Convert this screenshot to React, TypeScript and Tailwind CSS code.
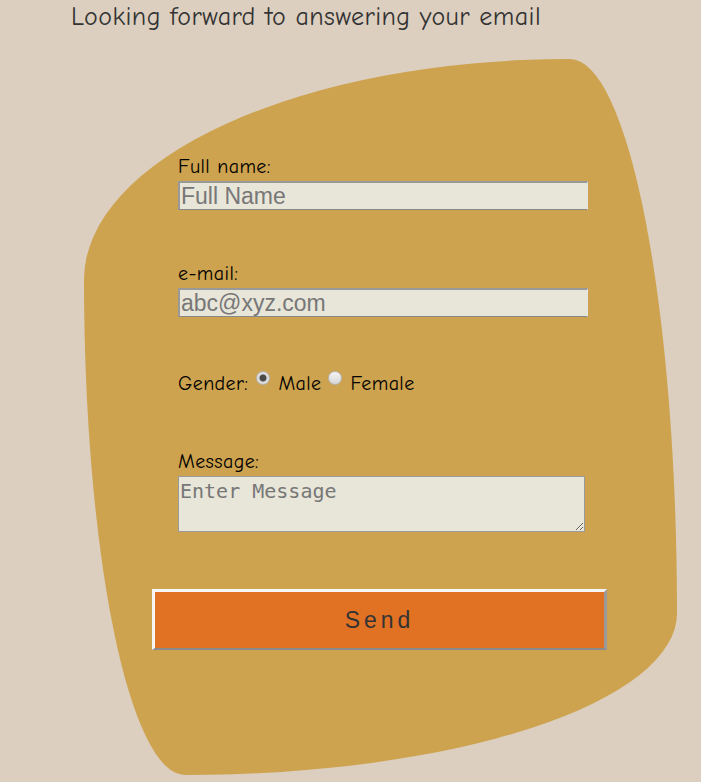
import { useState } from 'react';

const comic = 'font-["Comic_Sans_MS","Comic_Neue","Open_Sans",sans-serif]';

export default function App() {
  const [gender, setGender] = useState('male');

  return (
    <div className={`min-h-screen bg-[#dccfbf] overflow-hidden ${comic}`}>
      <h1 className="pl-[71px] text-[26px] tracking-[0.45px] leading-[35px] text-[#333333]">
        Looking forward to answering your email
      </h1>

      {/* Blob card */}
      <div className="ml-[84px] mt-[24px] w-[593px] h-[716px] bg-[#cda34f] rounded-[486px_107px_492px_101px/221px_554px_162px_495px]">
        <form className="pt-[96px] pl-[68px]" onSubmit={(e) => e.preventDefault()}>
          <div className="ml-[26px]">
            <label className="block text-[20px] tracking-[0.4px] leading-[24px] text-black">Full name:</label>
            <input
              type="text"
              placeholder="Full Name"
              className="mt-[2px] block w-[410px] h-[29px] bg-[#e8e5d9] border-t-2 border-l-2 border-b border-r border-t-[#999] border-l-[#999] border-b-[#888] border-r-[#e4e4e4] px-[1px] font-['Liberation_Sans',Arial,sans-serif] text-[23px] leading-[26px] text-[#555] placeholder:text-[#777] outline-none"
            />

            <label className="mt-[52px] block text-[20px] tracking-[0.4px] leading-[24px] text-black">e-mail:</label>
            <input
              type="email"
              placeholder="abc@xyz.com"
              className="mt-[2px] block w-[410px] h-[29px] bg-[#e8e5d9] border-t-2 border-l-2 border-b border-r border-t-[#999] border-l-[#999] border-b-[#888] border-r-[#e4e4e4] px-[1px] font-['Liberation_Sans',Arial,sans-serif] text-[23px] leading-[26px] text-[#555] placeholder:text-[#777] outline-none"
            />

            <div className="mt-[54px] text-[20px] tracking-[0.4px] leading-[24px] text-black">
              Gender:
              <input
                type="radio"
                name="gender"
                checked={gender === 'male'}
                onChange={() => setGender('male')}
                className="ml-[8px] mr-[8px] w-[14px] h-[14px] appearance-none rounded-full border border-[#b5b5b5] bg-[linear-gradient(#f4f4f4,#d6d6d6)] checked:bg-[radial-gradient(circle,#4a4a4a_0_3px,#dcdcdc_4px)] align-[5px]"
              />
              Male
              <input
                type="radio"
                name="gender"
                checked={gender === 'female'}
                onChange={() => setGender('female')}
                className="ml-[7px] mr-[8px] w-[14px] h-[14px] appearance-none rounded-full border border-[#b5b5b5] bg-[linear-gradient(#f4f4f4,#d6d6d6)] checked:bg-[radial-gradient(circle,#4a4a4a_0_3px,#dcdcdc_4px)] align-[5px]"
              />
              Female
            </div>

            <label className="mt-[54px] block text-[20px] tracking-[0.4px] leading-[24px] text-black">Message:</label>
            <textarea
              placeholder="Enter Message"
              className="mt-[2px] block w-[407px] h-[56px] bg-[#e8e5d9] border border-[#9a9a9a] px-[1px] py-[2px] font-['DejaVu_Sans_Mono',monospace] text-[20px] leading-[24px] text-[#444] placeholder:text-[#777] outline-none"
            />
          </div>

          <button
            type="submit"
            className="mt-[57px] block w-[455px] h-[61px] bg-[#e17224] border-t-[3px] border-l-[3px] border-b-2 border-r-[3px] border-t-[#f6f6f6] border-l-[#f6f6f6] border-b-[#8a8a8a] border-r-[#9a9a9a] font-['Liberation_Sans',Arial,sans-serif] text-[23px] tracking-[4px] text-[#333]"
          >
            Send
          </button>
        </form>
      </div>
    </div>
  );
}
